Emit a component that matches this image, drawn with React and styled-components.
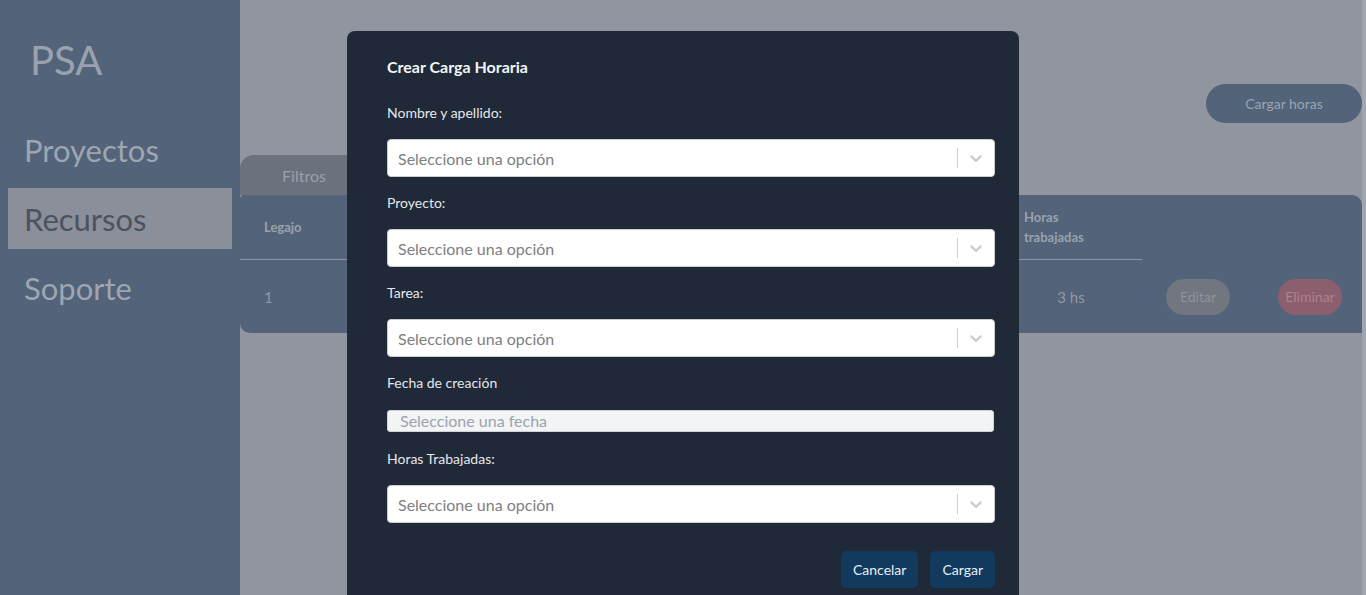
import React from 'react';
import styled, { createGlobalStyle } from 'styled-components';

const GlobalStyle = createGlobalStyle`
  html, body {
    margin: 0;
    padding: 0;
    height: 100%;
    overflow: hidden;
  }
  body {
    font-family: Lato, 'Noto Sans', sans-serif;
  }
  * {
    box-sizing: border-box;
  }
`;

const Layout = styled.div`
  display: flex;
  height: 100vh;
  background: #90959f;
`;

const Sidebar = styled.aside`
  width: 240px;
  flex-shrink: 0;
  background: #536379;
  display: flex;
  flex-direction: column;
`;

const Logo = styled.div`
  font-size: 40px;
  line-height: 48px;
  color: #9aa2ae;
  padding: 36px 0 0 30px;
  height: 119px;
`;

const Nav = styled.nav`
  display: flex;
  flex-direction: column;
  gap: 8px;
  padding: 0 8px;
`;

const NavItem = styled.div`
  height: 61px;
  display: flex;
  align-items: center;
  padding-left: 16px;
  font-size: 31px;
  color: ${(p) => (p.$active ? '#4b5361' : '#9ea6b2')};
  background: ${(p) => (p.$active ? '#8a8f99' : 'transparent')};
`;

const Main = styled.main`
  flex: 1;
  display: flex;
  flex-direction: column;
  border-right: 4px solid #a2a5ac;
`;

const TopBar = styled.div`
  display: flex;
  justify-content: flex-end;
  padding-top: 84px;
  height: 155px;
`;

const LoadButton = styled.button`
  width: 156px;
  height: 39px;
  border: none;
  border-radius: 20px;
  background: #536379;
  color: #9aa3b1;
  font-family: inherit;
  font-size: 14px;
`;

const FilterTab = styled.div`
  width: 128px;
  height: 40px;
  border-radius: 14px 14px 0 0;
  background: #6b717d;
  color: #9ba0aa;
  font-size: 16px;
  display: flex;
  align-items: center;
  justify-content: center;
`;

const Table = styled.div`
  display: grid;
  grid-template-columns: 120px 160px 160px 160px 160px 142px 112px 108px;
  background: #536379;
  border-radius: 4px 10px 0 10px;
`;

const HeadCell = styled.div`
  min-height: 64px;
  padding: 12px 24px;
  display: flex;
  align-items: center;
  font-size: 13px;
  font-weight: 700;
  line-height: 20px;
  color: #9aa1ad;
  border-bottom: ${(p) => (p.$plain ? 'none' : '1px solid #8e96a3')};
`;

const Cell = styled.div`
  height: 73px;
  padding: 0 24px;
  display: flex;
  align-items: center;
  justify-content: ${(p) => (p.$center ? 'center' : 'flex-start')};
  font-size: 15px;
  color: #8f98a6;
`;

const RowButton = styled.button`
  width: 64px;
  height: 36px;
  flex-shrink: 0;
  border: none;
  border-radius: 18px;
  font-family: inherit;
  font-size: 14px;
  background: ${(p) => (p.$danger ? '#8b5f6d' : '#71767f')};
  color: ${(p) => (p.$danger ? '#b1808d' : '#8e939c')};
`;

const Backdrop = styled.div`
  position: fixed;
  inset: 0;
`;

const Modal = styled.div`
  position: absolute;
  left: 347px;
  top: 31px;
  width: 672px;
  height: 580px;
  background: #1f2937;
  border-radius: 8px;
  padding: 26px 24px 0 40px;
  display: flex;
  flex-direction: column;
`;

const Title = styled.h2`
  margin: 0 0 26px;
  font-size: 16px;
  line-height: 20px;
  font-weight: 700;
  color: #f3f4f6;
`;

const Field = styled.div`
  display: flex;
  flex-direction: column;
  gap: ${(p) => (p.$date ? '17px' : '16px')};
  margin-bottom: ${(p) => (p.$date ? '17px' : '16px')};
`;

const Label = styled.label`
  font-size: 14px;
  line-height: 20px;
  color: #e5e7eb;
`;

const SelectBox = styled.div`
  width: 608px;
  height: 38px;
  background: #fff;
  border: 1px solid #ccc;
  border-radius: 4px;
  display: flex;
  align-items: center;
`;

const Placeholder = styled.div`
  flex: 1;
  padding-left: 10px;
  font-size: 16px;
  color: #808080;
`;

const Separator = styled.span`
  width: 1px;
  height: 20px;
  background: #ccc;
`;

const Indicator = styled.div`
  padding: 8px;
  display: flex;
  color: #ccc;
`;

const DateInput = styled.div`
  width: 607px;
  height: 22px;
  background: #f3f4f6;
  border: 1px solid #d1d5db;
  border-radius: 3px;
  padding-left: 12px;
  font-size: 16px;
  line-height: 20px;
  color: #9ca3af;
`;

const Actions = styled.div`
  display: flex;
  justify-content: flex-end;
  gap: 12px;
  width: 608px;
  margin-top: 12px;
`;

const ModalButton = styled.button`
  height: 37px;
  padding: 0 12px;
  border: none;
  border-radius: 5px;
  background: #113a5e;
  color: #e8edf3;
  font-family: inherit;
  font-size: 14px;
`;

const Chevron = () => (
  <svg width="20" height="20" viewBox="0 0 20 20" fill="currentColor">
    <path d="M4.516 7.548c0.436-0.446 1.043-0.481 1.576 0l3.908 3.747 3.908-3.747c0.533-0.481 1.141-0.446 1.574 0 0.436 0.445 0.408 1.197 0 1.615-0.406 0.418-4.695 4.502-4.695 4.502-0.217 0.223-0.502 0.335-0.787 0.335s-0.57-0.112-0.789-0.335c0 0-4.287-4.084-4.695-4.502s-0.436-1.17 0-1.615z" />
  </svg>
);

const Select = () => (
  <SelectBox>
    <Placeholder>Seleccione una opción</Placeholder>
    <Separator />
    <Indicator>
      <Chevron />
    </Indicator>
  </SelectBox>
);

// columns behind the modal are left empty, they can't be seen anyway
const hiddenCols = [0, 1, 2, 3];

const App = () => {
  return (
    <>
      <GlobalStyle />
      <Layout>
        <Sidebar>
          <Logo>PSA</Logo>
          <Nav>
            <NavItem>Proyectos</NavItem>
            <NavItem $active>Recursos</NavItem>
            <NavItem>Soporte</NavItem>
          </Nav>
        </Sidebar>
        <Main>
          <TopBar>
            <LoadButton>Cargar horas</LoadButton>
          </TopBar>
          <FilterTab>Filtros</FilterTab>
          <Table>
            <HeadCell>Legajo</HeadCell>
            {hiddenCols.map((c) => (
              <HeadCell key={c} />
            ))}
            <HeadCell>Horas trabajadas</HeadCell>
            <HeadCell $plain />
            <HeadCell $plain />
            <Cell>1</Cell>
            {hiddenCols.map((c) => (
              <Cell key={c} />
            ))}
            <Cell $center>3 hs</Cell>
            <Cell>
              <RowButton>Editar</RowButton>
            </Cell>
            <Cell>
              <RowButton $danger>Eliminar</RowButton>
            </Cell>
          </Table>
        </Main>
      </Layout>
      <Backdrop>
        <Modal>
          <Title>Crear Carga Horaria</Title>
          <Field>
            <Label>Nombre y apellido:</Label>
            <Select />
          </Field>
          <Field>
            <Label>Proyecto:</Label>
            <Select />
          </Field>
          <Field>
            <Label>Tarea:</Label>
            <Select />
          </Field>
          <Field $date>
            <Label>Fecha de creación</Label>
            <DateInput>Seleccione una fecha</DateInput>
          </Field>
          <Field>
            <Label>Horas Trabajadas:</Label>
            <Select />
          </Field>
          <Actions>
            <ModalButton>Cancelar</ModalButton>
            <ModalButton>Cargar</ModalButton>
          </Actions>
        </Modal>
      </Backdrop>
    </>
  );
};

export default App;
